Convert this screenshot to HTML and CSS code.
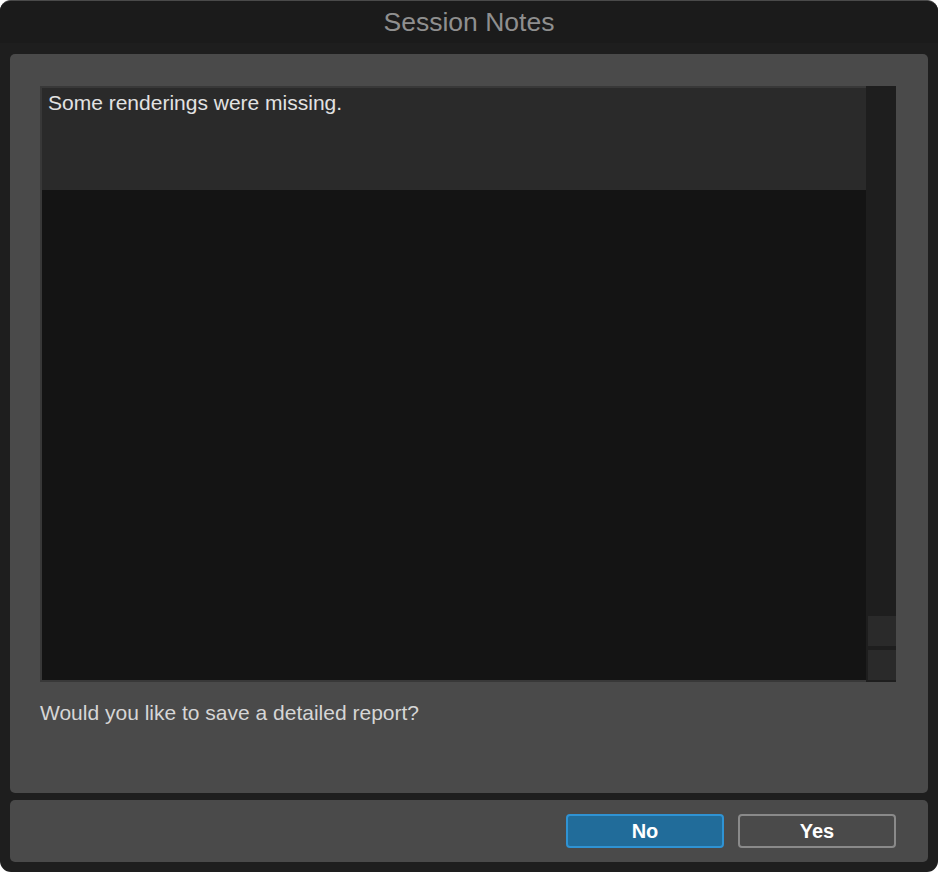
FILE: index.html
```html
<!DOCTYPE html>
<html lang="en">
<head>
<meta charset="utf-8">
<title>Session Notes</title>
<link rel="stylesheet" href="styles.css">
</head>
<body>
<div class="window">
  <div class="titlebar">Session Notes</div>
  <div class="content">
    <div class="panel main">
      <div class="notes">
        <div class="notes-body">
          <div class="notes-head">Some renderings were missing.</div>
          <div class="notes-rest"></div>
        </div>
        <div class="scrollbar">
          <div class="sb-btn"></div>
          <div class="sb-btn"></div>
        </div>
      </div>
      <p class="question">Would you like to save a detailed report?</p>
    </div>
    <div class="panel actions">
      <button class="btn btn-primary">No</button>
      <button class="btn btn-secondary">Yes</button>
    </div>
  </div>
</div>
</body>
</html>
```
FILE: styles.css
```css
html, body {
  margin: 0;
  padding: 0;
  background: #ffffff;
}
body {
  font-family: "Liberation Sans", Arial, sans-serif;
}
.window {
  width: 938px;
  height: 872px;
  box-sizing: border-box;
  background: #1e1e1e;
  border-radius: 11px;
  border-top: 1px solid #4a4a4a;
  overflow: hidden;
  display: flex;
  flex-direction: column;
}
.titlebar {
  height: 42px;
  flex: none;
  background: #1b1b1b;
  color: #8f8f8f;
  font-size: 26.5px;
  line-height: 42px;
  text-align: center;
}
.content {
  flex: 1;
  display: flex;
  flex-direction: column;
  gap: 7px;
  padding: 11px 10px 10px 10px;
}
.panel {
  background: #4a4a4a;
  border-radius: 5px;
}
.main {
  height: 739px;
  box-sizing: border-box;
  padding: 32px 32px 0 30px;
}
.notes {
  display: flex;
  height: 596px;
}
.notes-body {
  flex: 1;
  display: flex;
  flex-direction: column;
  border: 2px solid #383838;
  border-right: none;
  background: #141414;
}
.notes-head {
  height: 102px;
  box-sizing: border-box;
  background: #2a2a2a;
  color: #e2e2e2;
  font-size: 21px;
  line-height: 24px;
  padding: 3px 0 0 6px;
}
.notes-rest {
  flex: 1;
}
.scrollbar {
  width: 30px;
  box-sizing: border-box;
  background: #1e1e1e;
  display: flex;
  flex-direction: column;
  justify-content: flex-end;
  gap: 4px;
  padding: 0 0 2px 2px;
}
.sb-btn {
  height: 30px;
  background: #2a2a2a;
}
.question {
  margin: 19px 0 0 0;
  color: #d6d6d6;
  font-size: 21px;
  line-height: 24px;
}
.actions {
  height: 62px;
  box-sizing: border-box;
  display: flex;
  justify-content: flex-end;
  align-items: center;
  gap: 14px;
  padding-right: 32px;
}
.btn {
  width: 158px;
  height: 34px;
  box-sizing: border-box;
  border-radius: 4px;
  border: 2px solid;
  font-family: "Liberation Sans", Arial, sans-serif;
  font-weight: bold;
  font-size: 20px;
  color: #ffffff;
  padding: 0;
  line-height: 30px;
}
.btn-primary {
  background: #216c9a;
  border-color: #2f93d4;
}
.btn-secondary {
  background: #4a4a4a;
  border-color: #8a8a8a;
}
```
